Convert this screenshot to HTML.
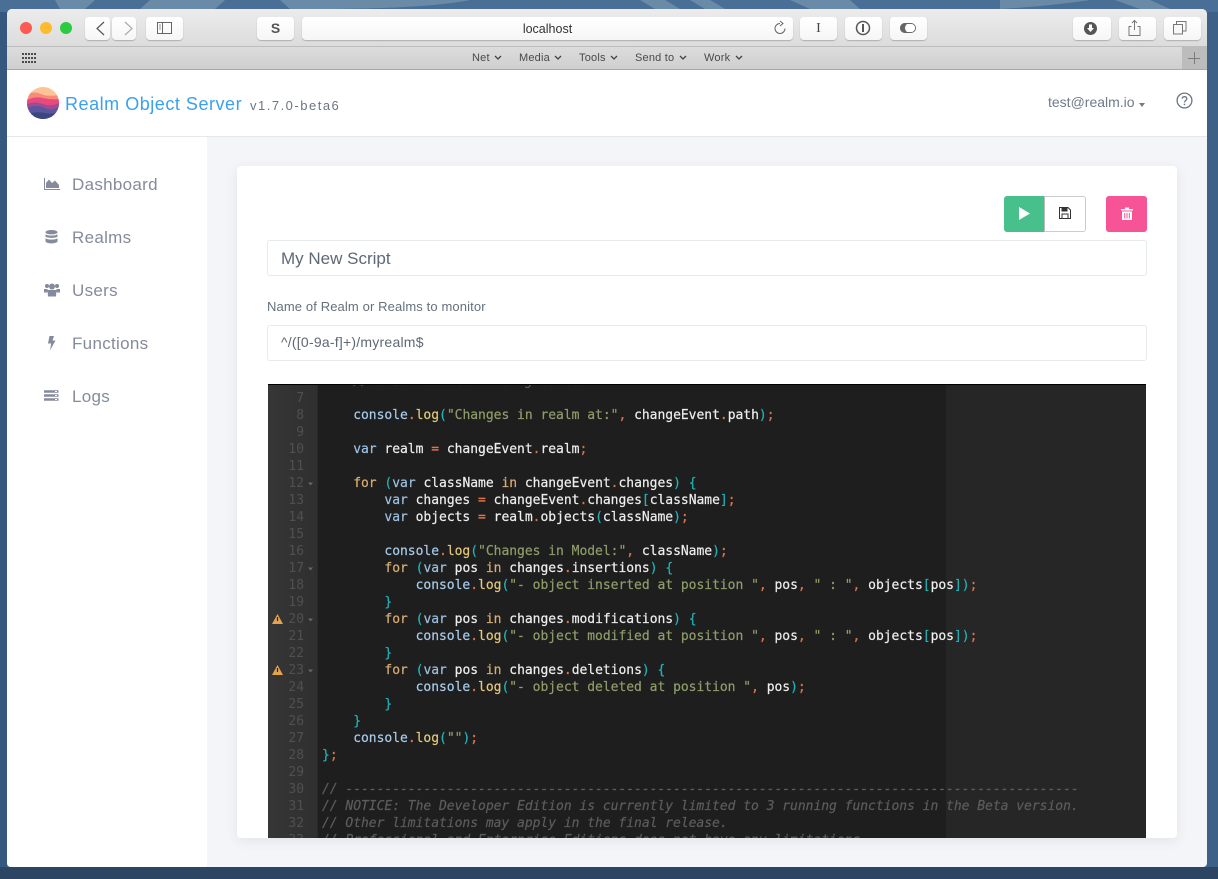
<!DOCTYPE html>
<html><head><meta charset="utf-8">
<style>
*{box-sizing:border-box}
html,body{margin:0;padding:0;width:1218px;height:879px;overflow:hidden;background:#3f6690;font-family:"Liberation Sans",sans-serif}
.a{position:absolute}
#win{position:absolute;left:7px;top:9px;width:1200px;height:858px;border-radius:5px 5px 4px 4px;overflow:hidden;background:#f4f5f8}
.tb{position:absolute;top:8px;height:23px;background:linear-gradient(#fff,#f6f6f6);border-radius:4px;box-shadow:0 1px 1px rgba(0,0,0,.22)}
.fav{position:absolute;top:43px;font-size:11px;color:#4a4a4a;letter-spacing:.2px;line-height:13px}
.nav{position:absolute;left:72px;font-size:17px;color:#858b9c;line-height:20px;letter-spacing:.3px}
.box{position:absolute;background:#fff;border:1px solid #e6eaea;border-radius:3px}
#ed{position:absolute;left:268px;top:384px;width:878px;height:454px;background:#1e1e1e;overflow:hidden;border-top:1px solid #000}
#gut{position:absolute;left:0;top:0;width:50px;height:454px;background:linear-gradient(90deg,#363636,#2f2f2f);border-right:1px solid #2a2a2a}
#pr{position:absolute;left:678px;top:0;width:200px;height:454px;background:#262626}
pre{margin:0;position:absolute;font-family:"DejaVu Sans Mono","Liberation Mono",monospace;font-size:13px;line-height:17px;letter-spacing:-.026px}
#code{left:54px;top:-12px;color:#eee;-webkit-text-stroke:.2px}
#nums{left:0;width:36px;top:-12px;text-align:right;color:#505050}
.k{color:#d7ae73}.v{color:#9cc0e0}.f{color:#e3c77b}.s{color:#8f9d6a}.p{color:#1fb5ba}.o{color:#e2734a}.c{color:#5c5c5c;font-style:italic}.m{color:#a7cbea}
</style></head>
<body>
<svg class="a" style="left:0;top:0" width="1218" height="879" viewBox="0 0 1218 879">
<rect width="1218" height="879" fill="#4a6f96"/>
<g fill="#6a8ba8">
<path d="M55 0H95L85 9H60ZM150 0H225L215 9H140ZM280 0H470Q420 10 290 9ZM640 0H665L680 9H655ZM690 0H710L725 9H705ZM790 0H850L860 9H810ZM1000 0H1090Q1050 6 1000 9ZM1115 0H1150L1170 9H1140Z"/>
</g>
<path d="M1207 300L1218 310M1207 470L1218 460" stroke="#6a8ba8" stroke-width="14"/>
<rect x="0" y="12" width="7" height="867" fill="#34587f"/>
<rect x="1207" y="12" width="11" height="867" fill="#3c6086"/>
<rect x="0" y="867" width="1218" height="12" fill="#2c4563"/>
</svg>
<div id="win">
  <div class="a" style="left:0;top:0;width:1200px;height:38px;background:linear-gradient(#ececec,#dcdcdc);border-bottom:1px solid #bdbdbd"></div>
  <div class="a" style="left:0;top:38px;width:1200px;height:23px;background:linear-gradient(#dcdcdc,#cfcfcf);border-bottom:1px solid #a8a8a8"></div>
  <div class="a" style="left:1175px;top:38px;width:25px;height:22px;background:#bcbcbc"></div>
  <div class="a" style="left:1181px;top:49px;width:12px;height:1px;background:#7c7c7c"></div>
  <div class="a" style="left:1187px;top:43px;width:1px;height:12px;background:#7c7c7c"></div>
  <div class="a" style="left:13px;top:13px;width:12px;height:12px;border-radius:50%;background:#fc5a52"></div>
  <div class="a" style="left:33px;top:13px;width:12px;height:12px;border-radius:50%;background:#fdbb2d"></div>
  <div class="a" style="left:53px;top:13px;width:12px;height:12px;border-radius:50%;background:#2aca41"></div>
  <div class="tb" style="left:78px;width:25px"></div><div class="tb" style="left:105px;width:24px"></div>
  <svg class="a" style="left:78px;top:8px" width="52" height="23" fill="none" stroke-width="1.2"><path d="M22 5L15 11.500L22 18" transform="translate(-3 0)" stroke="#555"/><path d="M41 5L48 11.500L41 18" transform="translate(-1 0)" stroke="#aaa"/></svg>
  <div class="tb" style="left:139px;width:37px"></div>
  <svg class="a" style="left:150px;top:13px" width="16" height="13" fill="none" stroke="#666"><rect x=".5" y=".5" width="14" height="11"/><path d="M5.500 0V12"/><path d="M2 3H4M2 5H4M2 7H4" stroke="#999"/></svg>
  <div class="tb" style="left:250px;width:37px;text-align:center;font:bold 14px/23px 'Liberation Sans';color:#555">S</div>
  <div class="tb" style="left:295px;width:491px;text-align:center;font-size:12.500px;line-height:24px;color:#333">localhost</div>
  <svg class="a" style="left:765px;top:11px" width="16" height="17" fill="none" stroke="#666"><path d="M8 3.500A5 5 0 1 0 13 8.500"/><path d="M8 1L11 3.500L8 6" /></svg>
  <div class="tb" style="left:793px;width:37px;text-align:center;font:14px/23px 'Liberation Serif';color:#444">I</div>
  <div class="tb" style="left:838px;width:37px"></div>
  <svg class="a" style="left:848px;top:11px" width="16" height="16" fill="none" stroke="#555"><circle cx="8" cy="8" r="6.500" stroke-width="1.500"/><path d="M8 4V12" stroke-width="2"/></svg>
  <div class="tb" style="left:883px;width:37px"></div>
  <svg class="a" style="left:893px;top:14px" width="16" height="10"><rect x=".5" y=".5" width="15" height="9" rx="4.500" fill="#fff" stroke="#666"/><path d="M5 0H10A5 5 0 0 0 10 10H5A5 5 0 0 1 5 0Z" fill="#666"/><circle cx="11" cy="5" r="4" fill="#fff"/></svg>
  <div class="tb" style="left:1066px;width:38px"></div>
  <svg class="a" style="left:1076px;top:12px" width="15" height="15"><circle cx="7.500" cy="7.500" r="6.500" fill="#555"/><path d="M6 3.500H9V7H11L7.500 11L4 7H6Z" fill="#fff"/></svg>
  <div class="tb" style="left:1112px;width:37px"></div>
  <svg class="a" style="left:1121px;top:10px" width="14" height="18" fill="none" stroke="#777"><path d="M3.500 7.500H1V16.500H12V7.500H9.500"/><path d="M6.500 11V1.500M4 4L6.500 1.500L9 4"/></svg>
  <div class="tb" style="left:1157px;width:37px"></div>
  <svg class="a" style="left:1166px;top:12px" width="14" height="14" fill="none" stroke="#777"><rect x=".5" y="3.500" width="9" height="9.500" fill="#f8f8f8"/><path d="M3.500 3V.5H13V10H10"/></svg>
  <svg class="a" style="left:15px;top:44px" width="15" height="11" fill="#4a4a4a"><path d="M0 0h2v2H0zM3 0h2v2H3zM6 0h2v2H6zM9 0h2v2H9zM12 0h2v2h-2zM0 4h2v2H0zM3 4h2v2H3zM6 4h2v2H6zM9 4h2v2H9zM12 4h2v2h-2zM0 8h2v2H0zM3 8h2v2H3zM6 8h2v2H6zM9 8h2v2H9zM12 8h2v2h-2z"/></svg>
  <div class="fav" style="left:465px">Net</div><div class="fav" style="left:512px">Media</div><div class="fav" style="left:572px">Tools</div><div class="fav" style="left:628px">Send to</div><div class="fav" style="left:697px">Work</div>
  <svg class="a" style="left:0;top:45px" width="760" height="8" fill="none" stroke="#444" stroke-width="1.300"><path d="M488 2l3 3 3-3M548 2l3 3 3-3M604 2l3 3 3-3M673 2l3 3 3-3M729 2l3 3 3-3"/></svg>

  <div class="a" style="left:0;top:61px;width:1200px;height:67px;background:#fff;border-bottom:1px solid #e6e7e8"></div>
  <svg class="a" style="left:20px;top:78px" width="32" height="32" viewBox="0 0 32 32"><defs><clipPath id="l"><circle cx="16" cy="16" r="16"/></clipPath></defs><g clip-path="url(#l)"><rect width="32" height="32" fill="#fcc397"/><path d="M0 7Q8 4 14 7T32 8V32H0Z" fill="#f88a78"/><path d="M0 13Q8 9 16 11T32 12V32H0Z" fill="#e9497f"/><path d="M0 17Q8 14 16 17T32 16V32H0Z" fill="#9a4d96"/><path d="M0 21Q10 17 18 21T32 19V32H0Z" fill="#59569e"/><path d="M0 27Q10 24 18 26T32 24V32H0Z" fill="#39477f"/></g></svg>
  <div class="a" style="left:58px;top:85px;font-size:18px;line-height:21px;color:#3ba0ee;letter-spacing:.53px;white-space:nowrap">Realm Object Server</div>
  <div class="a" style="left:243px;top:89px;font-size:13px;line-height:16px;color:#6b7585;letter-spacing:1.500px;white-space:nowrap">v1.7.0-beta6</div>
  <div class="a" style="left:1041px;top:86px;font-size:14px;line-height:15px;color:#717a8a;white-space:nowrap">test@realm.io</div>
  <div class="a" style="left:1132px;top:94px;border:3.500px solid transparent;border-top:4px solid #717a8a;border-bottom:0"></div>
  <svg class="a" style="left:1169px;top:83px" width="17" height="17" fill="none" stroke="#6b7585" stroke-width="1.300"><circle cx="8.500" cy="8.500" r="7.400"/><path d="M6.200 6.700C6.300 4 10.800 4 10.800 6.700C10.800 8.500 8.500 8.500 8.500 10.500" /><path d="M8.500 11.700V13.100" stroke-width="1.500"/></svg>

  <div class="a" style="left:0;top:128px;width:200px;height:730px;background:#fff"></div>
</div>

<svg class="a" style="left:44px;top:178px" width="16" height="12" fill="#858b9c"><path d="M0 0H1V11H16V12H0Z"/><path d="M2 10V5L5 1.500L8 5L11 2.500L15 7V10Z"/></svg>
<div class="nav" style="top:175px">Dashboard</div>
<svg class="a" style="left:45px;top:230px" width="13" height="14" fill="#858b9c"><ellipse cx="6.500" cy="2.200" rx="6" ry="2.200"/><path d="M.5 4.300C2 6 11 6 12.500 4.300V6.500C11 8.300 2 8.300 .5 6.500ZM.5 8.300C2 10 11 10 12.500 8.300V11.500C11 14 2 14 .5 11.500Z"/></svg>
<div class="nav" style="top:228px">Realms</div>
<svg class="a" style="left:44px;top:283px" width="16" height="14" fill="#858b9c"><circle cx="3" cy="3" r="2"/><circle cx="13" cy="3" r="2"/><circle cx="8" cy="3.500" r="3"/><path d="M0 6H3.500V9.500H0ZM12.500 6H16V9.500H12.500ZM3.500 7H12.500L12 13.500H4Z"/></svg>
<div class="nav" style="top:281px">Users</div>
<svg class="a" style="left:47px;top:336px" width="9" height="15" fill="#858b9c"><path d="M2.500 0H7L5.500 4.500H8.500L3 14.500L4.200 7.500H1Z"/></svg>
<div class="nav" style="top:334px">Functions</div>
<svg class="a" style="left:44px;top:390px" width="15" height="12" fill="none" stroke="#858b9c"><path d="M0 1.500H14.500M0 5.500H14.500M0 9.500H14.500" stroke-width="2.500"/><path d="M11 1.500h2M11 5.500h2M11 9.500h2" stroke="#fff" stroke-width="1"/></svg>
<div class="nav" style="top:387px">Logs</div>

<div class="a" style="left:237px;top:166px;width:940px;height:672px;background:#fff;border-radius:4px;box-shadow:0 3px 12px rgba(60,70,90,.09)"></div>
<div class="a" style="left:1004px;top:196px;width:41px;height:36px;background:#48c08c;border-radius:3px 0 0 3px"></div>
<svg class="a" style="left:1019px;top:207px" width="12" height="13"><path d="M0 0L11 6.500L0 13Z" fill="#fff"/></svg>
<div class="a" style="left:1044px;top:196px;width:42px;height:36px;background:#fff;border:1px solid #ccc;border-left:1px solid #bbb;border-radius:0 3px 3px 0"></div>
<svg class="a" style="left:1059px;top:207px" width="12" height="12" fill="none" stroke="#333"><path d="M.5 .5H9L11.500 3V11.500H.5Z"/><path d="M3 .5V4H8V.5" fill="#333"/><rect x="3" y="7" width="6" height="4.500"/></svg>
<div class="a" style="left:1106px;top:196px;width:41px;height:36px;background:#f75497;border-radius:3px"></div>
<svg class="a" style="left:1121px;top:207px" width="12" height="13" fill="#fff"><path d="M0 2H4V.5H8V2H12V3.500H0ZM1 4.500H11V13H1ZM3.200 6V11.500H4.200V6ZM5.500 6V11.500H6.500V6ZM7.800 6V11.500H8.800V6Z" fill-rule="evenodd"/></svg>

<div class="box" style="left:267px;top:240px;width:880px;height:36px;padding-left:13px;font-size:17px;line-height:35px;color:#5f6875">My New Script</div>
<div class="a" style="left:267px;top:299px;font-size:13px;line-height:15px;color:#66707c;letter-spacing:.12px;white-space:nowrap">Name of Realm or Realms to monitor</div>
<div class="box" style="left:267px;top:325px;width:880px;height:36px;padding-left:13px;font-size:14px;letter-spacing:.23px;line-height:33px;color:#5f6875">^/([0-9a-f]+)/myrealm$</div>

<div id="ed">
<div id="pr"></div>
<div id="gut"></div>
<pre id="nums">6
7
8
9
10
11
12
13
14
15
16
17
18
19
20
21
22
23
24
25
26
27
28
29
30
31
32
33</pre>
<svg class="a" style="left:0;top:1px" width="50" height="300"><g fill="#666"><path d="M40 96.500h5l-2.500 3zM40 181.500h5l-2.500 3zM40 232.500h5l-2.500 3zM40 283.500h5l-2.500 3z"/></g><path d="M4 238L9.500 228L15 238Z" fill="#e3a44d"/><path d="M4 289L9.500 279L15 289Z" fill="#e3a44d"/><path d="M9.500 231V235M9.500 282V286" stroke="#222" stroke-width="1.200"/></svg>
<pre id="code"><span class="c">    // Write handler code goes here</span>

    <span class="m">console</span><span class="o">.</span><span class="f">log</span><span class="p">(</span><span class="s">"Changes in realm at:"</span><span class="o">,</span> changeEvent<span class="o">.</span>path<span class="p">)</span><span class="o">;</span>

    <span class="v">var</span> realm <span class="o">=</span> changeEvent<span class="o">.</span>realm<span class="o">;</span>

    <span class="k">for</span> <span class="p">(</span><span class="v">var</span> className <span class="k">in</span> changeEvent<span class="o">.</span>changes<span class="p">)</span> <span class="p">{</span>
        <span class="v">var</span> changes <span class="o">=</span> changeEvent<span class="o">.</span>changes<span class="p">[</span>className<span class="p">]</span><span class="o">;</span>
        <span class="v">var</span> objects <span class="o">=</span> realm<span class="o">.</span>objects<span class="p">(</span>className<span class="p">)</span><span class="o">;</span>

        <span class="m">console</span><span class="o">.</span><span class="f">log</span><span class="p">(</span><span class="s">"Changes in Model:"</span><span class="o">,</span> className<span class="p">)</span><span class="o">;</span>
        <span class="k">for</span> <span class="p">(</span><span class="v">var</span> pos <span class="k">in</span> changes<span class="o">.</span>insertions<span class="p">)</span> <span class="p">{</span>
            <span class="m">console</span><span class="o">.</span><span class="f">log</span><span class="p">(</span><span class="s">"- object inserted at position "</span><span class="o">,</span> pos<span class="o">,</span> <span class="s">" : "</span><span class="o">,</span> objects<span class="p">[</span>pos<span class="p">])</span><span class="o">;</span>
        <span class="p">}</span>
        <span class="k">for</span> <span class="p">(</span><span class="v">var</span> pos <span class="k">in</span> changes<span class="o">.</span>modifications<span class="p">)</span> <span class="p">{</span>
            <span class="m">console</span><span class="o">.</span><span class="f">log</span><span class="p">(</span><span class="s">"- object modified at position "</span><span class="o">,</span> pos<span class="o">,</span> <span class="s">" : "</span><span class="o">,</span> objects<span class="p">[</span>pos<span class="p">])</span><span class="o">;</span>
        <span class="p">}</span>
        <span class="k">for</span> <span class="p">(</span><span class="v">var</span> pos <span class="k">in</span> changes<span class="o">.</span>deletions<span class="p">)</span> <span class="p">{</span>
            <span class="m">console</span><span class="o">.</span><span class="f">log</span><span class="p">(</span><span class="s">"- object deleted at position "</span><span class="o">,</span> pos<span class="p">)</span><span class="o">;</span>
        <span class="p">}</span>
    <span class="p">}</span>
    <span class="m">console</span><span class="o">.</span><span class="f">log</span><span class="p">(</span><span class="s">""</span><span class="p">)</span><span class="o">;</span>
<span class="p">}</span><span class="o">;</span>

<span class="c">// ----------------------------------------------------------------------------------------------</span>
<span class="c">// NOTICE: The Developer Edition is currently limited to 3 running functions in the Beta version.</span>
<span class="c">// Other limitations may apply in the final release.</span>
<span class="c">// Professional and Enterprise Editions does not have any limitations</span></pre>
</div>
</body></html>
